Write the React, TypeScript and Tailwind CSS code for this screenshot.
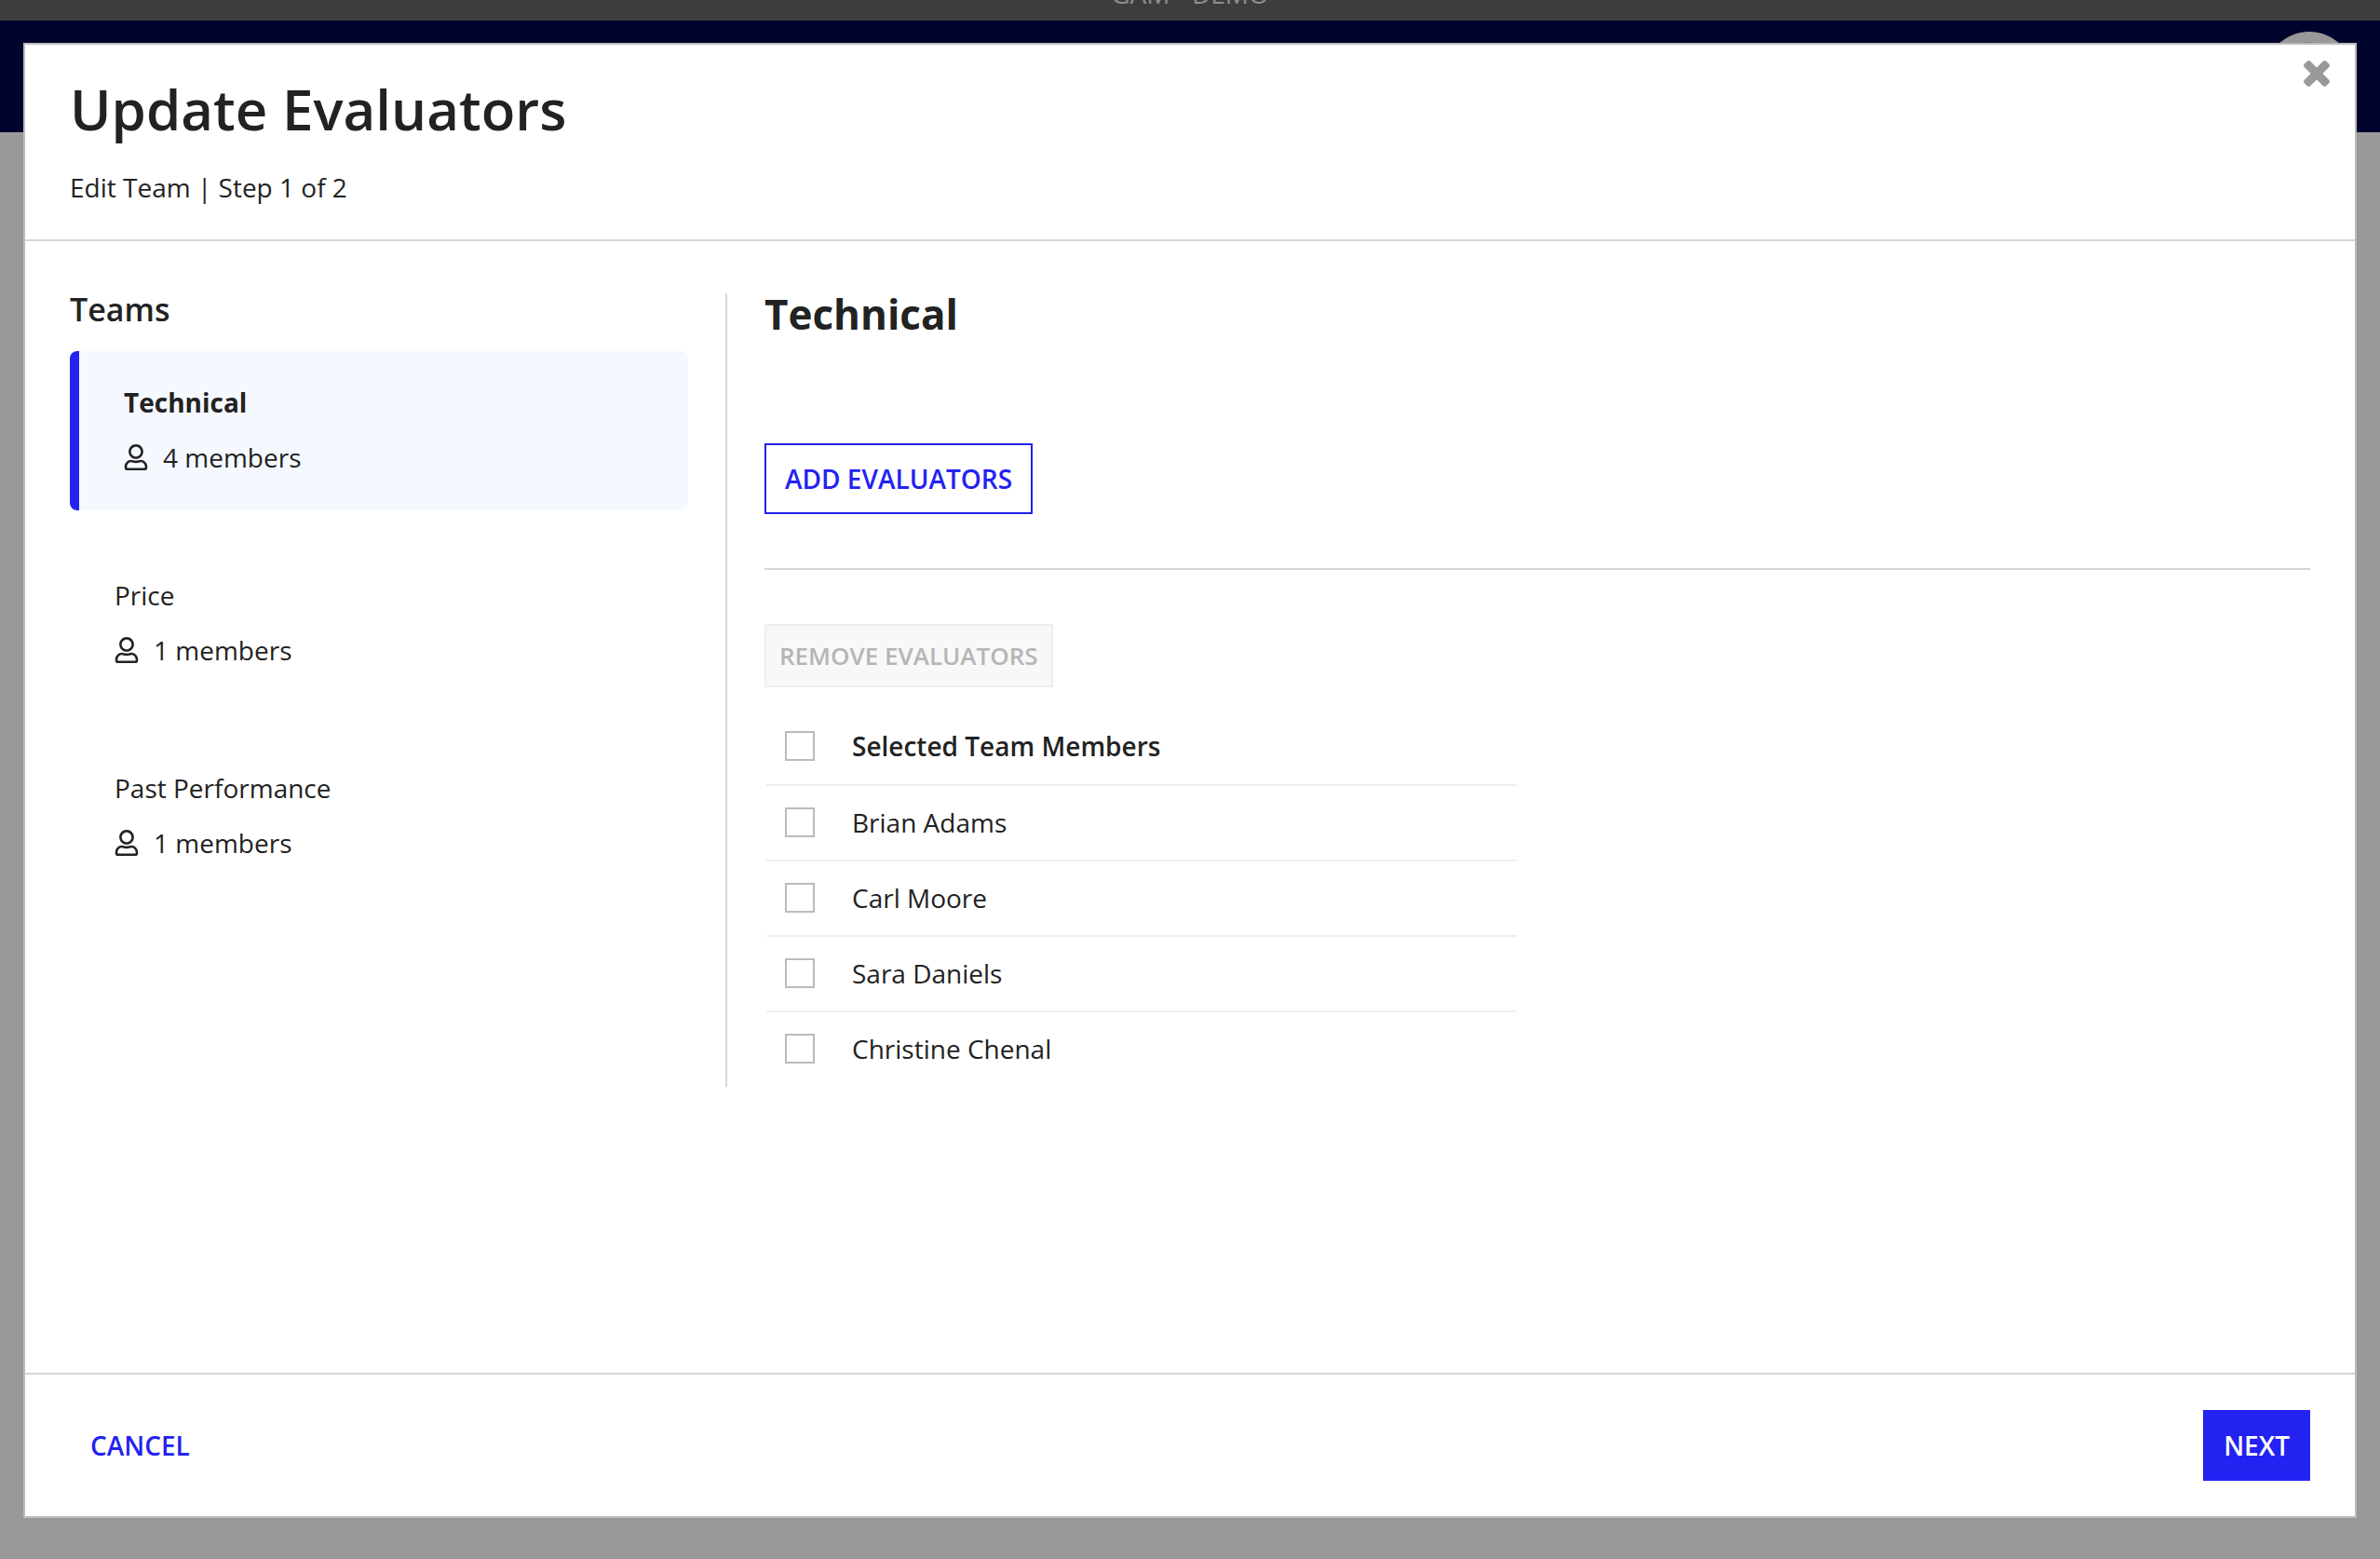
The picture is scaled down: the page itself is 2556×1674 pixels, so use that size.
import { useState } from "react";
import clsx from "clsx";
import { FaRegUser } from "react-icons/fa";

const TEAMS = [
  { name: "Technical", count: 4 },
  { name: "Price", count: 1 },
  { name: "Past Performance", count: 1 },
];

const MEMBERS = ["Brian Adams", "Carl Moore", "Sara Daniels", "Christine Chenal"];

function CloseIcon() {
  return (
    <svg viewBox="110 -18 1188 1188" className="h-7 w-7" fill="currentColor" aria-hidden="true">
      <path d="M1298 214q0 -40 -28 -68l-136 -136q-28 -28 -68 -28t-68 28l-294 294l-294 -294q-28 -28 -68 -28t-68 28l-136 136q-28 28 -28 68t28 68l294 294l-294 294q-28 28 -28 68t28 68l136 136q28 28 68 28t68 -28l294 -294l294 294q28 28 68 28t68 -28l136 -136q28 -28 28 -68t-28 -68l-294 -294l294 -294q28 -28 28 -68z" />
    </svg>
  );
}

function Backdrop() {
  return (
    <div className="absolute inset-0 overflow-hidden bg-[#999999]">
      <div className="flex h-[22px] items-end justify-center bg-[#3d3d3d] pb-3 text-[28px] leading-[34px] text-[#8e8e8e]">
        GAM - DEMO
      </div>
      <div className="flex h-[120px] items-center justify-end bg-[#00042d] px-7">
        <svg viewBox="0 0 96 96" className="h-24 w-24" aria-hidden="true">
          <circle cx="48" cy="48" r="48" fill="#989898" />
          <circle cx="48" cy="29" r="18" fill="#7c7c78" />
        </svg>
      </div>
    </div>
  );
}

interface TeamItemProps {
  name: string;
  count: number;
  active: boolean;
  onClick: () => void;
}

function TeamItem({ name, count, active, onClick }: TeamItemProps) {
  return (
    <button
      type="button"
      onClick={onClick}
      className={clsx(
        "flex w-full flex-col gap-[17px] rounded-lg px-12 pt-[34px] pb-9 text-left",
        active && "border-l-10 border-[#2322f0] bg-[#f5f8ff]"
      )}
    >
      <span className={clsx("leading-[42px]", active && "font-bold")}>{name}</span>
      <span className="flex items-center gap-4 leading-[42px]">
        <FaRegUser className="h-7 w-[26px]" />
        {count} members
      </span>
    </button>
  );
}

interface CheckboxProps {
  id: string;
  checked: boolean;
  onChange: () => void;
}

function Checkbox({ id, checked, onChange }: CheckboxProps) {
  return (
    <input
      id={id}
      type="checkbox"
      checked={checked}
      onChange={onChange}
      className="block h-8 w-8 appearance-none border-2 border-[#bbbbbb] bg-white checked:bg-[#2322f0]"
    />
  );
}

export default function App() {
  const [team, setTeam] = useState("Technical");
  const [selected, setSelected] = useState<string[]>([]);

  const allSelected = selected.length === MEMBERS.length;

  const toggle = (name: string) => {
    setSelected((prev) =>
      prev.includes(name) ? prev.filter((n) => n !== name) : [...prev, name]
    );
  };

  return (
    <div className="relative flex min-h-screen px-[25px] pt-[46px] pb-11 font-['Open_Sans',sans-serif] text-[28px] text-[#222222]">
      <Backdrop />

      <div
        role="dialog"
        aria-labelledby="dialog-title"
        className="relative flex flex-1 flex-col border-2 border-[#bbbbbb] bg-white"
      >
        <button
          type="button"
          aria-label="Close"
          className="absolute top-[17px] right-[27px] text-[#999999]"
        >
          <CloseIcon />
        </button>

        <header className="border-b-2 border-[#d5d5d5] px-12 pt-[33px] pb-[35px]">
          <h1 id="dialog-title" className="text-[60px] leading-[72px] font-semibold">
            Update Evaluators
          </h1>
          <p className="mt-[27px] leading-[42px]">Edit Team | Step 1 of 2</p>
        </header>

        <main className="flex-1 px-12 pt-14">
          <div className="grid grid-cols-[2fr_2px_5fr] gap-x-10">
            <nav aria-labelledby="teams-title">
              <h2 id="teams-title" className="text-[34px] leading-[34px] font-semibold">
                Teams
              </h2>
              <div className="mt-7 flex flex-col gap-9">
                {TEAMS.map((t) => (
                  <TeamItem
                    key={t.name}
                    name={t.name}
                    count={t.count}
                    active={t.name === team}
                    onClick={() => setTeam(t.name)}
                  />
                ))}
              </div>
            </nav>

            <div className="bg-[#d5d5d5]" />

            <section>
              <h2 className="text-[44px] leading-[44px] font-bold">{team}</h2>
              <button
                type="button"
                className="mt-[117px] block h-[76px] border-2 border-[#2322f0] px-5 font-semibold text-[#2322f0]"
              >
                ADD EVALUATORS
              </button>
              <hr className="mt-[58px] border-t-2 border-[#d5d5d5]" />
              <button
                type="button"
                disabled={selected.length === 0}
                className="mt-[58px] block h-[68px] border-2 border-[#eeeeee] bg-[#f8f8f8] px-[14px] text-[26px] font-semibold text-[#b5b5b5]"
              >
                REMOVE EVALUATORS
              </button>

              <table className="mt-6 ml-0.5 w-[calc(50%-24px)] text-left">
                <thead>
                  <tr className="h-[81px] border-b-2 border-[#eeeeee]">
                    <th className="w-[72px] pb-0.5 pl-5">
                      <Checkbox
                        id="member-all"
                        checked={allSelected}
                        onChange={() => setSelected(allSelected ? [] : MEMBERS)}
                      />
                    </th>
                    <th className="pb-0.5 pl-5 font-semibold">
                      <label htmlFor="member-all">Selected Team Members</label>
                    </th>
                  </tr>
                </thead>
                <tbody>
                  {MEMBERS.map((name, i) => (
                    <tr
                      key={name}
                      className="h-[81px] border-b-2 border-[#eeeeee] last:border-b-0"
                    >
                      <td className="pb-0.5 pl-5">
                        <Checkbox
                          id={`member-${i}`}
                          checked={selected.includes(name)}
                          onChange={() => toggle(name)}
                        />
                      </td>
                      <td className="pb-0.5 pl-5">
                        <label htmlFor={`member-${i}`}>{name}</label>
                      </td>
                    </tr>
                  ))}
                </tbody>
              </table>
            </section>
          </div>
        </main>

        <footer className="flex items-center justify-between border-t-2 border-[#d5d5d5] px-12 py-[38px]">
          <button
            type="button"
            className="h-[76px] border-2 border-transparent px-5 font-semibold text-[#2322f0]"
          >
            CANCEL
          </button>
          <button
            type="button"
            className="h-[76px] border-2 border-[#2322f0] bg-[#2322f0] px-5 font-semibold text-white"
          >
            NEXT
          </button>
        </footer>
      </div>
    </div>
  );
}
